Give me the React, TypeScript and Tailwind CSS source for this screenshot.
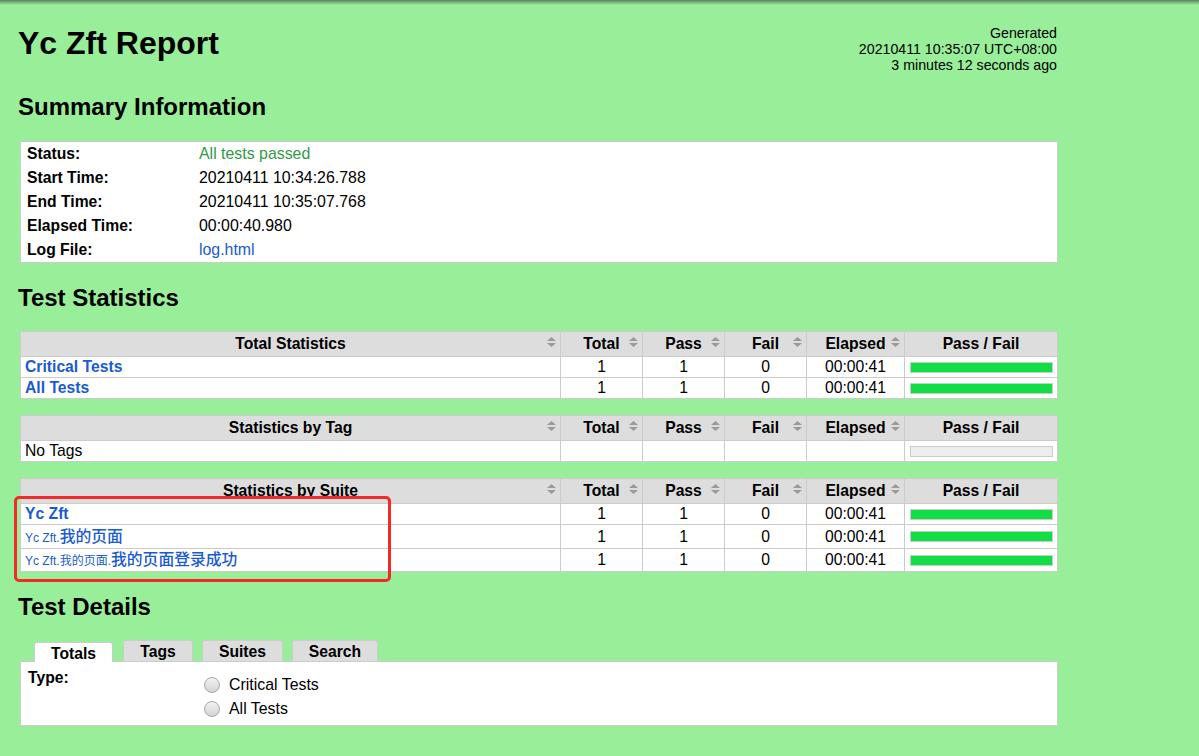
import type { ReactNode } from "react";

const font = "font-['Liberation_Sans','Noto_Sans_CJK_SC',sans-serif]";

type StatRow = {
  name: ReactNode;
  total?: string;
  pass?: string;
  fail?: string;
  elapsed?: string;
  bar: "pass" | "empty";
  h: string;
};

const summary: { label: string; value: ReactNode }[] = [
  { label: "Status:", value: <span className="text-[#339944]">All tests passed</span> },
  { label: "Start Time:", value: "20210411 10:34:26.788" },
  { label: "End Time:", value: "20210411 10:35:07.768" },
  { label: "Elapsed Time:", value: "00:00:40.980" },
  { label: "Log File:", value: <a className="text-[#1a5bd0]">log.html</a> },
];

function SortIcon() {
  return (
    <svg width="9" height="10" viewBox="0 0 9 10" className="absolute right-[4px] top-[5px]">
      <path d="M0 4 L4.5 0 L9 4 Z M0 6 L4.5 10 L9 6 Z" fill="#9a9a9a" />
    </svg>
  );
}

function HeadCell({ children, sort = true }: { children: ReactNode; sort?: boolean }) {
  return (
    <div className="relative flex h-[24px] items-center justify-center bg-[#dddddd] font-bold">
      {children}
      {sort && <SortIcon />}
    </div>
  );
}

function StatTable({ title, rows }: { title: string; rows: StatRow[] }) {
  return (
    <div className="ml-[2px] grid w-[1038px] grid-cols-[539px_81px_81px_81px_97px_152px] gap-px bg-[#cccccc] p-px">
      <HeadCell>{title}</HeadCell>
      <HeadCell>Total</HeadCell>
      <HeadCell>Pass</HeadCell>
      <HeadCell>Fail</HeadCell>
      <HeadCell>Elapsed</HeadCell>
      <HeadCell sort={false}>Pass / Fail</HeadCell>
      {rows.map((r, i) => (
        <div key={i} className="contents">
          <div className={`flex items-center bg-white pl-[4px] ${r.h}`}>{r.name}</div>
          <div className={`flex items-center justify-center bg-white ${r.h}`}>{r.total}</div>
          <div className={`flex items-center justify-center bg-white ${r.h}`}>{r.pass}</div>
          <div className={`flex items-center justify-center bg-white ${r.h}`}>{r.fail}</div>
          <div className={`flex items-center justify-center bg-white ${r.h}`}>{r.elapsed}</div>
          <div className={`flex items-center bg-white pl-[5px] pr-[4px] ${r.h}`}>
            {r.bar === "pass" ? (
              <div className="h-[11px] w-full border border-[#cccccc] bg-[#11dd44]" />
            ) : (
              <div className="h-[11px] w-full border border-[#cccccc] bg-[#eeeeee]" />
            )}
          </div>
        </div>
      ))}
    </div>
  );
}

const link = "text-[#1a5bd0]";

export default function App() {
  return (
    <div className={`relative min-h-screen bg-[#99ee99] text-[15.7px] text-black ${font}`}>
      <div className="absolute inset-x-0 top-0 h-[5px] bg-linear-to-b from-[#5f7d5f] to-transparent" />
      <div className="relative w-[1058px] pl-[18px]">
        <div className="flex items-start justify-between">
          <h1 className="mt-[27px] text-[32px] leading-[32px] font-bold">Yc Zft Report</h1>
          <div className="mt-[25px] mr-px text-right text-[14.2px] leading-[16px]">
            <div>Generated</div>
            <div>20210411 10:35:07 UTC+08:00</div>
            <div>3 minutes 12 seconds ago</div>
          </div>
        </div>

        <h2 className="mt-[22px] text-[24px] leading-[24px] font-bold">Summary Information</h2>
        <div className="mt-[22px] ml-[2px] w-[1038px] border border-[#cccccc] bg-white">
          {summary.map((s) => (
            <div key={s.label} className="flex h-[24px] items-center pb-[1px]">
              <div className="w-[178px] pl-[6px] font-bold">{s.label}</div>
              <div className="text-[15.9px]">{s.value}</div>
            </div>
          ))}
        </div>

        <h2 className="mt-[23px] text-[24px] leading-[24px] font-bold">Test Statistics</h2>
        <div className="mt-[21px]">
          <StatTable
            title="Total Statistics"
            rows={[
              { name: <a className={`${link} font-bold`}>Critical Tests</a>, total: "1", pass: "1", fail: "0", elapsed: "00:00:41", bar: "pass", h: "h-[20px]" },
              { name: <a className={`${link} font-bold`}>All Tests</a>, total: "1", pass: "1", fail: "0", elapsed: "00:00:41", bar: "pass", h: "h-[20px]" },
            ]}
          />
        </div>
        <div className="mt-[16px]">
          <StatTable title="Statistics by Tag" rows={[{ name: "No Tags", bar: "empty", h: "h-[20px]" }]} />
        </div>
        <div className="mt-[16px]">
          <StatTable
            title="Statistics by Suite"
            rows={[
              { name: <a className={`${link} font-bold`}>Yc Zft</a>, total: "1", pass: "1", fail: "0", elapsed: "00:00:41", bar: "pass", h: "h-[20px]" },
              {
                name: (
                  <a className={link}>
                    <span className="text-[12px]">Yc Zft.</span>
                    <span className="text-[15.8px] font-medium">我的页面</span>
                  </a>
                ),
                total: "1",
                pass: "1",
                fail: "0",
                elapsed: "00:00:41",
                bar: "pass",
                h: "h-[23px]",
              },
              {
                name: (
                  <a className={link}>
                    <span className="text-[12px]">Yc Zft.我的页面.</span>
                    <span className="text-[15.8px] font-medium">我的页面登录成功</span>
                  </a>
                ),
                total: "1",
                pass: "1",
                fail: "0",
                elapsed: "00:00:41",
                bar: "pass",
                h: "h-[22px]",
              },
            ]}
          />
        </div>

        <h2 className="mt-[23px] text-[24px] leading-[24px] font-bold">Test Details</h2>
        <div className="mt-[21px] ml-[2px] w-[1038px]">
          <div className="flex h-[21px] items-end gap-[9px] pl-[14px] font-bold">
            <div className="relative z-10 mr-[1px] -mb-px flex h-[20px] w-[79px] items-center justify-center rounded-t-[3px] border border-b-0 border-[#cccccc] bg-white pt-[2px]">
              Totals
            </div>
            <div className="flex h-[21px] w-[70px] items-center justify-center rounded-t-[3px] border border-b-0 border-[#cccccc] bg-[#dddddd] pt-px">
              Tags
            </div>
            <div className="flex h-[21px] w-[81px] items-center justify-center rounded-t-[3px] border border-b-0 border-[#cccccc] bg-[#dddddd] pt-px">
              Suites
            </div>
            <div className="flex h-[21px] w-[86px] items-center justify-center rounded-t-[3px] border border-b-0 border-[#cccccc] bg-[#dddddd] pt-px">
              Search
            </div>
          </div>
          <div className="flex h-[65px] border border-[#cccccc] bg-white">
            <div className="w-[183px] pt-[4px] pl-[7px] leading-[24px] font-bold">Type:</div>
            <div className="pt-[11px]">
              {["Critical Tests", "All Tests"].map((t) => (
                <div key={t} className="flex h-[24px] items-center">
                  <span className="mr-[9px] h-[16px] w-[16px] rounded-full border border-[#a8a8a8] bg-linear-to-b from-[#f2f2f2] to-[#d4d4d4]" />
                  <span className="text-[15.9px]">{t}</span>
                </div>
              ))}
            </div>
          </div>
        </div>

        <div className="absolute top-[496px] left-[14px] h-[86px] w-[377px] rounded-[5px] border-[3px] border-[#f5282a]" />
      </div>
    </div>
  );
}
